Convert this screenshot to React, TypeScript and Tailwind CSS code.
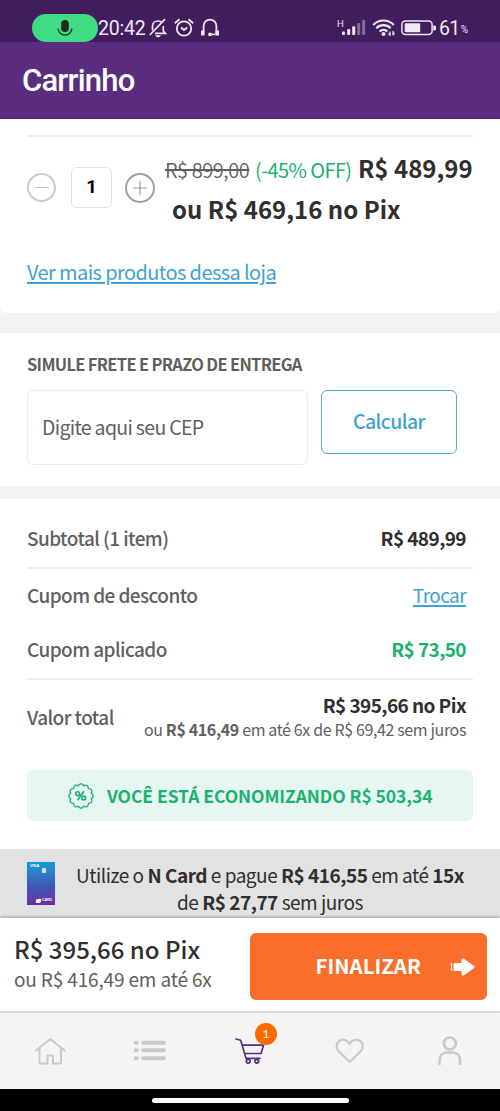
import type { ReactNode } from "react";

const price = "font-bold text-[#2f2f2f]";

function MicIcon() {
  return (
    <svg width="16" height="18" viewBox="0 0 16 18" fill="none" stroke="#173a27" strokeWidth="1.5">
      <rect x="4.2" y="1" width="7.6" height="12" rx="3.8" fill="#1c2a22" stroke="none" />
      <path d="M1.2 9.5a6.8 6.6 0 0 0 13.6 0" />
    </svg>
  );
}

function BellOffIcon() {
  return (
    <svg width="18" height="20" viewBox="0 0 18 20" fill="none" stroke="#eee8f4" strokeWidth="1.7">
      <path d="M3.500 12.500V8.300C3.500 5 6 3 9 3c1.500 0 3 .5 4 1.500M14.300 8v5l2 2.300H6" />
      <path d="M.8 17 16 1.200" />
      <path d="M6.500 17.500h5L10 19H8z" fill="#eee8f4" strokeWidth=".6" />
    </svg>
  );
}

function AlarmIcon() {
  return (
    <svg width="20" height="20" viewBox="0 0 20 20" fill="none" stroke="#eee8f4" strokeWidth="1.8">
      <circle cx="10" cy="10.500" r="7.200" />
      <path d="M7 9.500l3 2.500 3.200-2.500M.8 5.200 5.500 1.200M19.200 5.200l-4.700-4" />
    </svg>
  );
}

function HeadphonesIcon() {
  return (
    <svg width="20" height="20" viewBox="0 0 20 20" fill="none" stroke="#eee8f4" strokeWidth="1.8">
      <path d="M3.600 16V8a6.400 6.400 0 0 1 12.800 0v8M9.500 16.300h6" />
      <path d="M2.700 12.500v5M17.300 12.500v5" strokeWidth="3.400" />
      <circle cx="10" cy="16.300" r="1.900" fill="#eee8f4" stroke="none" />
    </svg>
  );
}

function SignalIcon() {
  return (
    <svg width="30" height="20" viewBox="0 0 30 20" fill="#eee8f4">
      <rect x="5" y="13.500" width="3" height="3.500" rx="1" />
      <rect x="10.200" y="11" width="3" height="6" rx="1" />
      <rect x="15.200" y="8.300" width="3" height="8.700" rx="1" />
      <rect x="20.200" y="5" width="3" height="12" rx="1" opacity=".4" />
      <rect x="25.200" y="2" width="3" height="15" rx="1" opacity=".4" />
    </svg>
  );
}

function WifiIcon() {
  return (
    <svg width="24" height="18" viewBox="0 0 24 18" fill="none" stroke="#eee8f4" strokeWidth="2.200">
      <path d="M1.200 5.900a14.300 14.300 0 0 1 20.600 0M4.300 9.200a10.200 10.200 0 0 1 14.400 0M7.600 12.500a5.600 5.600 0 0 1 7.800 0" />
      <circle cx="11.500" cy="15" r="2" fill="#eee8f4" stroke="none" />
      <path d="M18 12.500V17M21 12v4.500M16.200 15H18M21 14.500h1.800" strokeWidth="1.300" />
    </svg>
  );
}

function BatteryIcon() {
  return (
    <svg width="35" height="16" viewBox="0 0 35 16">
      <rect x=".9" y=".9" width="30.200" height="13.700" rx="3.500" fill="none" stroke="#eee8f4" strokeWidth="1.500" />
      <rect x="3.700" y="3.300" width="15.500" height="9" rx="1" fill="#eee8f4" />
      <path d="M32.300 5.500h1a1.300 1.300 0 0 1 0 5h-1z" fill="#eee8f4" />
    </svg>
  );
}

function SealIcon() {
  // scalloped edge: twelve bumps around the centre
  const points = Array.from({ length: 12 }, (_, i) => {
    const a = (i * Math.PI) / 6 - Math.PI / 2;
    const b = a + Math.PI / 12;
    const c = a + Math.PI / 6;
    const at = (r: number, t: number) => `${(13 + r * Math.cos(t)).toFixed(2)} ${(13 + r * Math.sin(t)).toFixed(2)}`;
    return `${i === 0 ? "M" + at(12.3, a) : ""}Q${at(12, a + 0.16)} ${at(10.5, b)}Q${at(12, b + 0.1)} ${at(12.3, c)}`;
  }).join("");
  return (
    <svg width="26" height="26" viewBox="0 0 26 26" fill="none" stroke="#1bb171" strokeWidth="1.3">
      <path d={points} strokeLinejoin="round" />
      <circle cx="9.700" cy="10.700" r="1.900" strokeWidth="1.600" />
      <circle cx="15.800" cy="15" r="1.900" strokeWidth="1.600" />
      <path d="M16 8.300 9.500 17.300" strokeWidth="1.600" />
    </svg>
  );
}

function NCard() {
  return (
    <div className="flex h-[43px] w-7 flex-col justify-between bg-linear-to-b from-[#0b9ad8] via-[#3d55b5] via-60% to-[#6a2ba5] px-[3px] pt-px pb-[2px] font-['Liberation_Sans'] font-bold text-white">
      <div className="flex justify-between text-[4px] leading-[5px]">
        <span>VISA</span>
        <span className="mt-[5px] mr-[6px] h-[5px] w-1 rounded-[1px] bg-[#cde6ee]" />
      </div>
      <div className="flex items-center justify-end gap-px text-[3.5px] leading-[5px]">
        <span className="h-[4px] w-[5px] -skew-x-12 rounded-[1px] bg-white" />
        <span>CARD</span>
      </div>
    </div>
  );
}

function ArrowIcon() {
  return (
    <svg width="25" height="18" viewBox="0 0 25 18" fill="#fff">
      <path d="M.8 5h1.400v8H.800z" opacity=".85" />
      <path d="M4.800 5h6.700V1.800C11.500.5 13 .1 14 .7l9.800 7c.9.700.9 1.800 0 2.500l-9.800 7c-1 .700-2.500.200-2.500-1.100V13H4.800c-.9 0-1.200-.4-1.200-1.200V6.200C3.600 5.400 3.900 5 4.800 5z" />
    </svg>
  );
}

function HomeIcon() {
  return (
    <svg width="32" height="28" viewBox="0 0 32 28" fill="none" stroke="#c9c9c9" strokeWidth="2" strokeLinecap="round" strokeLinejoin="round">
      <path d="M2 13.500 16.300 2l14.200 11.500M5.500 11.500v15h8v-8h5.500v8h8v-15" />
    </svg>
  );
}

function ListIcon() {
  return (
    <svg width="34" height="22" viewBox="0 0 34 22" stroke="#c9c9c9" strokeWidth="4" strokeLinecap="round">
      <path d="M2.500 2.800h1.200M10 2.800h21M2.500 10.300h1.200M10 10.300h21M2.500 18.300h1.200M10 18.300h21" />
    </svg>
  );
}

function CartIcon() {
  return (
    <svg width="32" height="28" viewBox="0 0 32 28" fill="none" stroke="#592d80" strokeWidth="1.700" strokeLinecap="round" strokeLinejoin="round">
      <path d="M2 2l4.700 1.300 5.300 18h14M8.300 8.200h21.200L27 16.500H10.700" />
      <circle cx="14.200" cy="24.300" r="1.900" />
      <circle cx="22.800" cy="24.300" r="1.900" />
    </svg>
  );
}

function HeartIcon() {
  return (
    <svg width="30" height="26" viewBox="0 0 30 26" fill="none" stroke="#c9c9c9" strokeWidth="2.300">
      <path d="M14.700 24 4 13.500C.7 10 1.200 5.500 4 3.200c3.200-2.700 8-1.800 10.700 2.300 2.700-4.100 7.500-5 10.700-2.300 2.800 2.300 3.300 6.800 0 10.300z" />
    </svg>
  );
}

function UserIcon() {
  return (
    <svg width="26" height="30" viewBox="0 0 26 30" fill="none" stroke="#c9c9c9" strokeWidth="2.700" strokeLinecap="round">
      <circle cx="12.800" cy="7.500" r="6" />
      <path d="M2.500 28v-3.500c0-5 3.300-8 7.500-8h5.600c4.200 0 7.500 3 7.500 8V28" />
    </svg>
  );
}

function StatusBar() {
  return (
    <div className="flex h-[42px] shrink-0 items-center bg-[#411d5e] pt-[13px] pl-8 font-[Roboto] text-[#eee8f4]">
      <div className="flex h-7 w-[66px] items-center justify-center rounded-full bg-[#40dc84]">
        <MicIcon />
      </div>
      <span className="w-[51px] pt-[2px] text-[19.500px] leading-none tracking-[-0.2px]">20:42</span>
      <BellOffIcon />
      <span className="ml-[7px]"><AlarmIcon /></span>
      <span className="ml-[6px]"><HeadphonesIcon /></span>
      <div className="ml-[117px] flex items-center">
        <div className="relative">
          <span className="absolute top-px left-0 text-[9.500px] leading-none">H</span>
          <SignalIcon />
        </div>
        <span className="ml-[5px]"><WifiIcon /></span>
        <span className="ml-[5px]"><BatteryIcon /></span>
        <span className="ml-[3px] pt-[2px] text-[19.500px] leading-none tracking-[-0.6px]">61</span>
        <span className="mt-[5px] ml-px text-[10px] leading-none">%</span>
      </div>
    </div>
  );
}

function Row({ label, children }: { label: string; children: ReactNode }) {
  return (
    <>
      <span className="shrink-0 font-medium text-[#5f5f5f]">{label}</span>
      {children}
    </>
  );
}

export default function App() {
  return (
    <div className="flex h-[1111px] w-[500px] flex-col overflow-hidden bg-[#f4f4f4] font-['Noto_Sans_CJK_SC','Noto_Sans',sans-serif] text-[#5f5f5f]">
      <StatusBar />
      <header className="flex h-[77px] shrink-0 items-center border-b border-[#43205f] bg-[#5a2d80] px-[22px] pt-[2px]">
        <h1 className="font-[Roboto] text-[31px] font-medium tracking-[-0.8px] text-white">Carrinho</h1>
      </header>

      <section className="h-[194px] shrink-0 rounded-b-md bg-white px-[27px] pt-4">
        <div className="h-[2px] bg-[#eeeeee]" />
        <div className="flex pt-[11px]">
          <div className="flex h-[79px] w-[137px] shrink-0 items-center">
            <div className="flex size-[29px] items-center justify-center rounded-full border-2 border-[#cccccc]">
              <span className="h-px w-[14px] bg-[#c4c4c4]" />
            </div>
            <div className="ml-[15px] flex h-[41px] w-[41px] items-center justify-center rounded-md border border-[#e2e2e2] font-[Roboto] text-[18.500px] font-bold text-black">
              1
            </div>
            <div className="ml-[13px] flex size-[30px] items-center justify-center rounded-full border-2 border-[#a0a0a0]">
              <svg width="14" height="14" viewBox="0 0 14 14" stroke="#999" strokeWidth="1.200">
                <path d="M0 7h14M7 0v14" />
              </svg>
            </div>
          </div>
          <div className="leading-[39px] whitespace-nowrap">
            <div className="flex items-baseline">
              <span className="w-[91px] pl-px text-[20px] font-[350] tracking-[-0.450px]">
                <s>R$ 899,00</s>
              </span>
              <span className="w-[103px] text-[20px] tracking-[-0.6px] text-[#1bb171]">(-45% OFF)</span>
              <span className={`text-[24px] ${price}`}>R$ 489,99</span>
            </div>
            <div className={`pl-2 text-[24px] ${price}`}>ou R$ 469,16 no Pix</div>
          </div>
        </div>
        <a className="mt-[31px] block text-[20px] leading-[26px] tracking-[-0.6px] text-[#3fa3cf] underline decoration-[1.500px] underline-offset-2">
          Ver mais produtos dessa loja
        </a>
      </section>

      <section className="mt-5 h-[153px] shrink-0 bg-white px-[27px] pt-[19px]">
        <h2 className="text-[16.500px] leading-6 font-bold tracking-[-0.680px]">SIMULE FRETE E PRAZO DE ENTREGA</h2>
        <div className="mt-[14px] flex gap-[13px]">
          <div className="flex h-[75px] w-[281px] items-center rounded-md border border-[#ececec] pb-[2px] pl-[14px] text-[19.500px] tracking-[-0.680px]">
            Digite aqui seu CEP
          </div>
          <button className="h-16 w-[136px] rounded-md border border-[#4badd5] pb-[2px] text-[19.500px] font-medium tracking-[-0.6px] text-[#3fa3cf]">
            Calcular
          </button>
        </div>
      </section>

      <section className="mt-[13px] h-[350px] shrink-0 bg-white px-[27px] pt-[10px] text-[19px] leading-6 tracking-[-0.580px]">
        <div className="flex h-[58px] items-center justify-between pr-[7px]">
          <Row label="Subtotal (1 item)">
            <span className={price}>R$ 489,99</span>
          </Row>
        </div>
        <div className="h-[2px] bg-[#efefef]" />
        <div className="flex h-[53px] items-center justify-between pr-[7px] pb-[2px]">
          <Row label="Cupom de desconto">
            <a className="text-[#3fa3cf] underline decoration-[1.500px] underline-offset-2">Trocar</a>
          </Row>
        </div>
        <div className="flex h-[56px] items-center justify-between pr-[7px] pb-[3px]">
          <Row label="Cupom aplicado">
            <span className="font-bold text-[#1bb171]">R$ 73,50</span>
          </Row>
        </div>
        <div className="h-[2px] bg-[#efefef]" />
        <div className="flex h-[74px] items-center justify-between pr-[7px]">
          <Row label="Valor total">
            <div className="text-right leading-[25px] whitespace-nowrap">
              <p className={price}>R$ 395,66 no Pix</p>
              <p className="text-[16px] tracking-[-0.370px]">
                ou <b>R$ 416,49</b> em até 6x de R$ 69,42 sem juros
              </p>
            </div>
          </Row>
        </div>
        <div className="mt-4 flex h-[51px] items-center rounded-md bg-[#e6f6f1] pl-[41px]">
          <SealIcon />
          <span className="ml-[13px] text-[17.500px] font-bold tracking-[-0.070px] text-[#1bb171]">
            VOCÊ ESTÁ ECONOMIZANDO R$ 503,34
          </span>
        </div>
      </section>

      <section className="flex h-[69px] shrink-0 bg-[#e2e2e2] pl-[27px]">
        <div className="pt-[13px]">
          <NCard />
        </div>
        <p className="w-[430px] pt-3 text-center text-[19px] leading-[27px] tracking-[-0.480px] whitespace-nowrap text-[#2f2f2f]">
          Utilize o <b>N Card</b> e pague <b>R$ 416,55</b> em até <b>15x</b>
          <br />
          de <b>R$ 27,77</b> sem juros
        </p>
      </section>

      <section className="relative flex h-[93px] shrink-0 justify-between bg-white pt-[15px] pr-[13px] pl-[14px] shadow-[0_-1px_3px_rgba(0,0,0,0.3)]">
        <div className="-mt-px whitespace-nowrap">
          <p className="text-[24px] leading-[33px] font-medium text-[#2f2f2f]">R$ 395,66 no Pix</p>
          <p className="text-[19px] leading-[27px] tracking-[-0.150px]">ou R$ 416,49 em até 6x</p>
        </div>
        <button className="flex h-[67px] w-[237px] items-center justify-end rounded-md bg-[#f96e2a] pr-[12px] text-[20.500px] font-bold text-white">
          <span className="mr-[29px] pb-[2px]">FINALIZAR</span>
          <ArrowIcon />
        </button>
      </section>

      <nav className="grid h-[78px] shrink-0 grid-cols-5 items-center justify-items-center border-t-2 border-[#e0e0e0] bg-[#f4f4f4]">
        <HomeIcon />
        <ListIcon />
        <div className="relative">
          <CartIcon />
          <span className="absolute top-[-14px] left-[21px] flex size-[22px] items-center justify-center rounded-full bg-[#ff6a00] font-[Lato] text-[12px] text-white">
            1
          </span>
        </div>
        <HeartIcon />
        <UserIcon />
      </nav>
      <div className="flex h-[22px] shrink-0 justify-center bg-black pt-[9px]">
        <div className="h-[5px] w-[197px] rounded-full bg-white" />
      </div>
    </div>
  );
}
